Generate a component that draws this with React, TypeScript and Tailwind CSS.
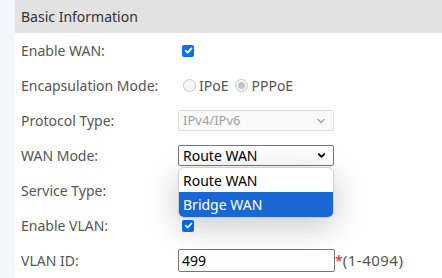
import { ChevronDown } from "lucide-react";

const ROWS_FONT = { fontFamily: '"Noto Sans", "Noto Sans CJK SC", sans-serif' };

const Row = ({ label, children }: { label: string; children?: React.ReactNode }) => (
  <div className="h-[35px] flex items-center">
    <span className="w-[163px] shrink-0 pl-[6px] text-[14px] text-[#555]">{label}</span>
    <div className="flex items-center">{children}</div>
  </div>
);

const Check = () => (
  <span className="ml-[4px] w-[12px] h-[12px] rounded-[2px] bg-[#0b6ff2] flex items-center justify-center">
    <svg width="9" height="9" viewBox="0 0 10 10">
      <path d="M1.8 5.2 L4 7.4 L8.3 2.6" stroke="#fff" strokeWidth="2" fill="none" strokeLinecap="round" strokeLinejoin="round" />
    </svg>
  </span>
);

const Radio = ({ checked }: { checked?: boolean }) => (
  <span className="w-[13px] h-[13px] rounded-full border border-[#c8c8c8] bg-[#f6f6f6] flex items-center justify-center">
    {checked && <span className="w-[7px] h-[7px] rounded-full bg-[#c4c4c4]" />}
  </span>
);

export default function App() {
  return (
    <div className="w-[442px] h-[278px] flex bg-[#f4f8fc] overflow-hidden" style={ROWS_FONT}>
      <div className="w-[15px] shrink-0" />
      <div className="flex-1 bg-white relative">
        <div className="h-[33px] bg-[#e2e2e2] flex items-center pl-[6px] text-[14px] text-[#333]">
          Basic Information
        </div>
        <Row label="Enable WAN:">
          <Check />
        </Row>
        <Row label="Encapsulation Mode:">
          <div className="ml-[5px] flex items-center gap-[3px] text-[14px] text-[#555]">
            <Radio />
            <span className="mr-[4px]">IPoE</span>
            <Radio checked />
            <span>PPPoE</span>
          </div>
        </Row>
        <Row label="Protocol Type:">
          <div className="w-[156px] h-[21px] border border-[#e0e0e0] rounded-[2px] bg-[#fafafa] flex items-center justify-between pl-[4px] pr-[6px] text-[13px] text-[#a0a0a0]">
            <span>IPv4/IPv6</span>
            <ChevronDown size={12} strokeWidth={2.5} className="text-[#9a9a9a]" />
          </div>
        </Row>
        <Row label="WAN Mode:">
          <div className="w-[156px] h-[21px] border border-[#767676] rounded-[2px] bg-white flex items-center justify-between pl-[4px] pr-[6px] text-[14px] text-black">
            <span>Route WAN</span>
            <ChevronDown size={11} strokeWidth={4} className="text-black" />
          </div>
        </Row>
        <Row label="Service Type:" />
        <Row label="Enable VLAN:">
          <Check />
        </Row>
        <Row label="VLAN ID:">
          <div className="w-[157px] h-[23px] border border-[#767676] rounded-[2px] bg-white flex items-center pl-[3px] text-[14px] text-black">
            499
          </div>
          <span className="text-[14px] text-[#e02020]">*</span>
          <span className="text-[15px] tracking-[0.5px] text-[#555]">(1-4094)</span>
        </Row>

        <div className="absolute left-[163px] top-[167px] w-[156px] rounded-[6px] border border-[#d0d0d0] bg-white overflow-hidden shadow-[0_8px_32px_rgba(0,0,0,0.22)] text-[14px]">
          <div className="h-[24px] flex items-center pl-[4px] text-black">Route WAN</div>
          <div className="h-[25px] flex items-center pl-[4px] bg-[#1a66d2] text-white">Bridge WAN</div>
        </div>
      </div>
    </div>
  );
}
